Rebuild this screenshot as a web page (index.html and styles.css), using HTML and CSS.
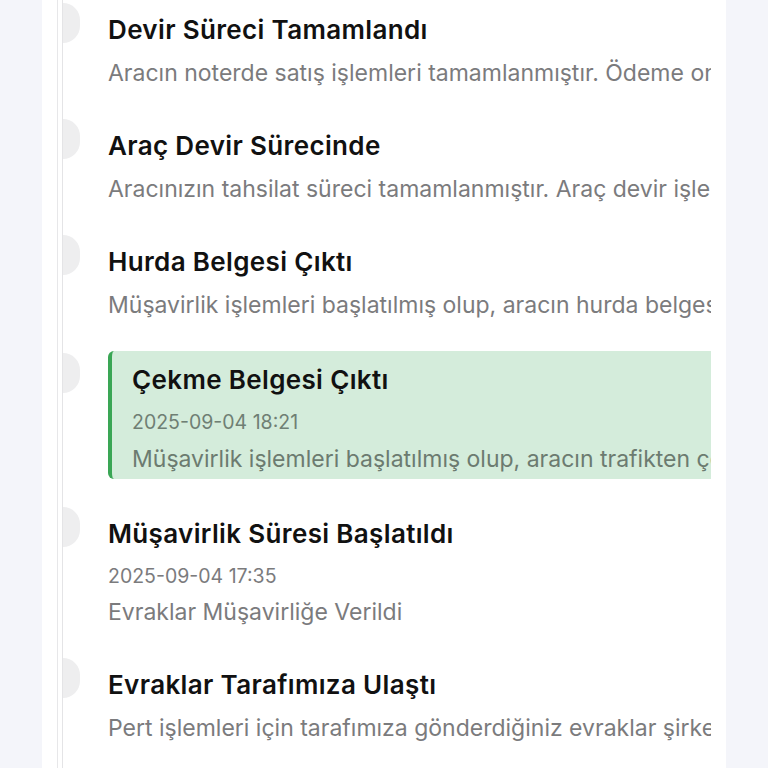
FILE: index.html
```html
<!DOCTYPE html>
<html lang="tr">
<head>
<meta charset="utf-8">
<title>Süreç</title>
<link rel="stylesheet" href="styles.css">
</head>
<body>
<div class="card">
  <div class="rail"></div>
  <ul class="timeline">
    <li class="item">
      <span class="dot"></span>
      <div class="title">Devir Süreci Tamamlandı</div>
      <div class="desc">Aracın noterde satış işlemleri tamamlanmıştır. Ödeme onayı sonrasında süreç kapatılacaktır.</div>
    </li>
    <li class="item">
      <span class="dot"></span>
      <div class="title">Araç Devir Sürecinde</div>
      <div class="desc">Aracınızın tahsilat süreci tamamlanmıştır. Araç devir işlemleri başlatılmıştır.</div>
    </li>
    <li class="item">
      <span class="dot"></span>
      <div class="title">Hurda Belgesi Çıktı</div>
      <div class="desc">Müşavirlik işlemleri başlatılmış olup, aracın hurda belgesi çıkarılmıştır.</div>
    </li>
    <li class="item active">
      <span class="dot"></span>
      <div class="box">
        <div class="title">Çekme Belgesi Çıktı</div>
        <div class="date">2025-09-04 18:21</div>
        <div class="desc">Müşavirlik işlemleri başlatılmış olup, aracın trafikten çekme belgesi alınmıştır.</div>
      </div>
    </li>
    <li class="item dated">
      <span class="dot"></span>
      <div class="title">Müşavirlik Süresi Başlatıldı</div>
      <div class="date">2025-09-04 17:35</div>
      <div class="desc">Evraklar Müşavirliğe Verildi</div>
    </li>
    <li class="item">
      <span class="dot"></span>
      <div class="title">Evraklar Tarafımıza Ulaştı</div>
      <div class="desc">Pert işlemleri için tarafımıza gönderdiğiniz evraklar şirketimize ulaşmıştır.</div>
    </li>
  </ul>
</div>
</body>
</html>
```

FILE: styles.css
```css
html, body {
  margin: 0;
  padding: 0;
  height: 100%;
  background: #f4f5fa;
  font-family: Inter, "Noto Sans", "DejaVu Sans", sans-serif;
  overflow: hidden;
}

.card {
  position: relative;
  margin-left: 42px;
  width: 684px;
  height: 768px;
  background: #ffffff;
  overflow: hidden;
}

.rail {
  position: absolute;
  left: 15px;
  top: 0;
  bottom: 0;
  width: 4px;
  border-left: 1px solid #e7e7e9;
  border-right: 1px solid #e4e4e6;
}

.timeline {
  list-style: none;
  margin: 0;
  padding: 14px 15px 0 66px;
}

.item {
  position: relative;
  margin-bottom: 43px;
}

.dot {
  position: absolute;
  left: -45px;
  top: -11px;
  width: 17px;
  height: 40px;
  border-radius: 0 20px 20px 0;
  background: #eeeeef;
}

.title {
  font-size: 26px;
  font-weight: 600;
  line-height: 32px;
  color: #111111;
  letter-spacing: 0.35px;
  white-space: nowrap;
}

.desc {
  margin-top: 13px;
  font-size: 23px;
  line-height: 28px;
  color: #7b7b7d;
  white-space: nowrap;
  overflow: hidden;
}

.date {
  margin-top: 13px;
  font-size: 19.5px;
  line-height: 26px;
  color: #7b7b7d;
  white-space: nowrap;
}

.dated .desc {
  margin-top: 9px;
}

.item.active {
  margin-top: -11px;
  margin-bottom: 39px;
}

.active .dot {
  top: 2px;
}

.box {
  background: #d4ecdb;
  border-left: 4px solid #3aa655;
  border-radius: 6px 0 0 6px;
  padding: 13px 0 6px 20px;
  overflow: hidden;
}

.box .date {
  color: #6f7f74;
}

.box .desc {
  margin-top: 10px;
  color: #6c7b70;
}
```
